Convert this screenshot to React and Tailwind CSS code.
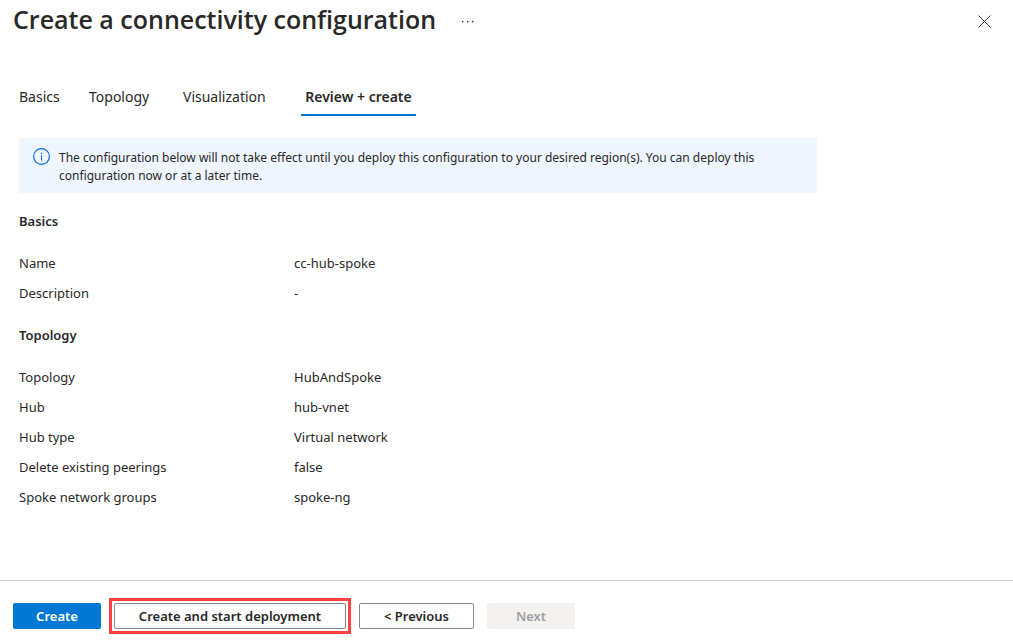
const tabs = [
  { label: "Basics", width: "w-[40px]" },
  { label: "Topology", width: "w-[64px]" },
  { label: "Visualization", width: "w-[88px]" },
  { label: "Review + create", width: "w-[115px]", active: true },
];

const sections = [
  {
    title: "Basics",
    rows: [
      ["Name", "cc-hub-spoke"],
      ["Description", "-"],
    ],
  },
  {
    title: "Topology",
    rows: [
      ["Topology", "HubAndSpoke"],
      ["Hub", "hub-vnet"],
      ["Hub type", "Virtual network"],
      ["Delete existing peerings", "false"],
      ["Spoke network groups", "spoke-ng"],
    ],
  },
];

function Header() {
  return (
    <header className="flex h-[42px] items-center pl-[13px] pr-5">
      <h1 className="pb-1 font-['Segoe_UI','Open_Sans',sans-serif] text-[25px] leading-8 font-semibold">
        Create a connectivity configuration
      </h1>
      <button type="button" aria-label="More actions" className="ml-6 flex h-6 w-4 items-center justify-center">
        <svg width="14" height="4" viewBox="0 0 14 4" fill="#323130" aria-hidden="true">
          <rect x="1" y="2" width="1.4" height="1.4" />
          <rect x="6" y="2" width="1.4" height="1.4" />
          <rect x="11" y="2" width="1.4" height="1.4" />
        </svg>
      </button>
      <button type="button" aria-label="Close" className="ml-auto flex size-4 items-center justify-center">
        <svg width="16" height="16" viewBox="0 0 16 16" stroke="#323130" strokeWidth="1" fill="none" aria-hidden="true">
          <path d="M1.5 2.5 L13.5 14.5 M13.5 2.5 L1.5 14.5" />
        </svg>
      </button>
    </header>
  );
}

function Tabs() {
  return (
    <nav role="tablist" aria-label="Steps" className="mt-9 flex gap-[30px] pl-[19px]">
      {tabs.map((tab) => (
        <button
          key={tab.label}
          type="button"
          role="tab"
          aria-selected={Boolean(tab.active)}
          className={`h-[38px] border-b-2 pt-[2px] text-sm whitespace-nowrap ${tab.width} ${
            tab.active ? "border-[#0078d4] text-center font-semibold" : "border-transparent text-left"
          }`}
        >
          {tab.label}
        </button>
      ))}
    </nav>
  );
}

function InfoBanner() {
  return (
    <div role="status" className="mt-[22px] flex max-w-[798px] gap-2 bg-[#eff6ff] pt-[10px] pb-2 pl-[14px] pr-6">
      <svg className="shrink-0" width="18" height="18" viewBox="0 0 18 18" fill="none" stroke="#0f6cde" aria-hidden="true">
        <circle cx="8.5" cy="8.5" r="7.9" strokeWidth="1.2" />
        <path d="M8.5 7.2 V12.5" strokeWidth="1.1" />
        <path d="M8.5 4.6 V6" strokeWidth="1.2" />
      </svg>
      <p className="pt-px text-xs leading-[18px]">
        The configuration below will not take effect until you deploy this configuration to your desired region(s). You
        can deploy this configuration now or at a later time.
      </p>
    </div>
  );
}

function Section({ title, rows }) {
  return (
    <section>
      <h2 className="mb-3 leading-[30px] font-semibold">{title}</h2>
      <dl className="grid grid-cols-[275px_1fr] leading-[30px]">
        {rows.map(([label, value]) => (
          <div key={label} className="contents">
            <dt>{label}</dt>
            <dd>{value}</dd>
          </div>
        ))}
      </dl>
    </section>
  );
}

function Footer() {
  const base = "h-[26px] rounded-xs pt-[2px] text-[13px] font-semibold whitespace-nowrap";
  return (
    <footer className="mt-auto flex gap-[13px] border-t border-[#cccccc] pt-[22px] pb-[15px] pl-[13px]">
      <button type="button" className={`${base} w-[88px] bg-[#0078d4] text-white`}>Create</button>
      <div className="flex outline-3 outline-offset-2 outline-[#ff4343]">
        <button type="button" className={`${base} w-[232px] border border-[#8a8886]`}>
          Create and start deployment
        </button>
      </div>
      <button type="button" className={`${base} w-[115px] border border-[#8a8886]`}>&lt; Previous</button>
      <button type="button" disabled className={`${base} w-[88px] bg-[#f3f2f1] text-[#a19f9d]`}>Next</button>
    </footer>
  );
}

export default function App() {
  return (
    <div className="flex min-h-screen flex-col bg-white font-['Segoe_UI','Noto_Sans',sans-serif] text-[13px] text-[#292827]">
      <Header />
      <Tabs />
      <main className="px-[19px] pb-8">
        <InfoBanner />
        <div className="mt-[13px] flex flex-col gap-3">
          {sections.map((section) => (
            <Section key={section.title} title={section.title} rows={section.rows} />
          ))}
        </div>
      </main>
      <Footer />
    </div>
  );
}
